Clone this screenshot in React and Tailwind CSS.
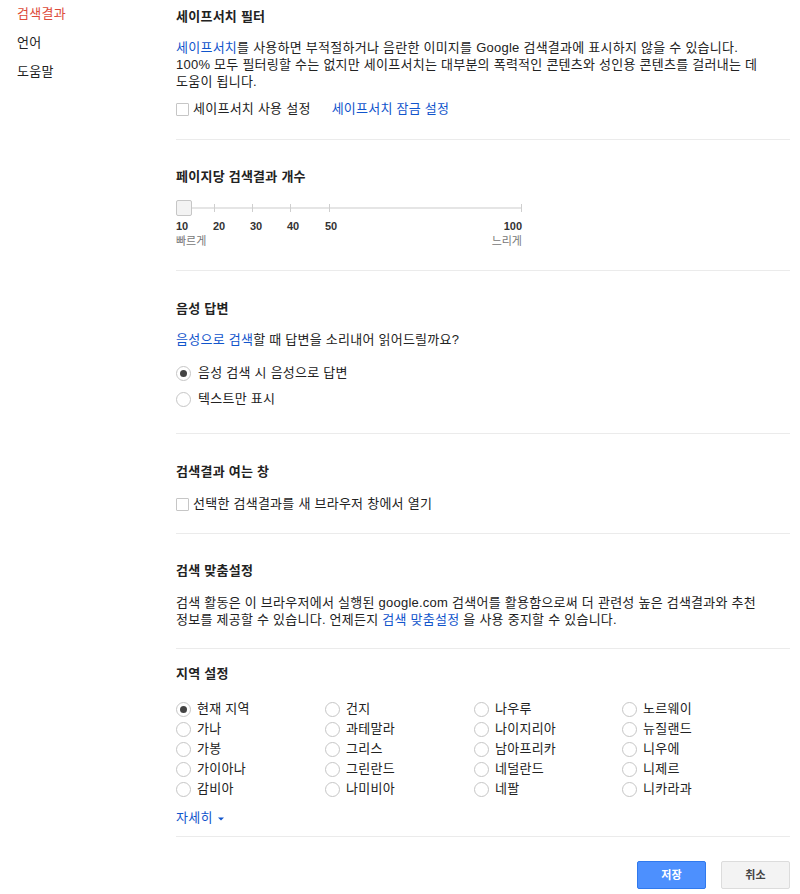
import React from "react";

const FONT = { fontFamily: '"Liberation Sans", Arial, "Noto Sans CJK KR", sans-serif' };

function Checkbox({ label }) {
  return (
    <label className="flex items-center h-5">
      <span className="w-[13px] h-[13px] border border-[#c6c6c6] rounded-[1px] bg-white mr-[4px]" />
      <span className="text-[#222]">{label}</span>
    </label>
  );
}

function Radio({ label, checked, gap = "ml-[7px]" }) {
  return (
    <div className="flex items-center h-5 whitespace-nowrap">
      <span className="w-[15px] h-[15px] rounded-full border border-[#c6c6c6] bg-white flex items-center justify-center shrink-0">
        {checked && <span className="w-[7px] h-[7px] rounded-full bg-[#444]" />}
      </span>
      <span className={`${gap} text-[#222]`}>{label}</span>
    </div>
  );
}

function Divider({ className = "" }) {
  return <div className={`h-px bg-[#ebebeb] w-[614px] ${className}`} />;
}

function Heading({ children, className = "" }) {
  return <div className={`h-5 leading-5 font-bold text-[#222] ${className}`}>{children}</div>;
}

const regions = [
  ["현재 지역", "건지", "나우루", "노르웨이"],
  ["가나", "과테말라", "나이지리아", "뉴질랜드"],
  ["가봉", "그리스", "남아프리카", "니우에"],
  ["가이아나", "그린란드", "네덜란드", "니제르"],
  ["감비아", "나미비아", "네팔", "니카라과"],
];

function Slider() {
  const ticks = [38, 76, 114, 153];
  const labels = [
    { t: "20", x: 37 },
    { t: "30", x: 74 },
    { t: "40", x: 111 },
    { t: "50", x: 149 },
  ];
  return (
    <div className="w-[346px] mt-[13px] tracking-normal">
      <div className="relative h-4">
        <div className="absolute left-[8px] right-0 top-[7px] h-[2px] bg-[#e5e5e5]" />
        {ticks.map((x) => (
          <div key={x} className="absolute top-[4px] w-px h-[8px] bg-[#cfcfcf]" style={{ left: x }} />
        ))}
        <div className="absolute right-0 top-[4px] w-px h-[8px] bg-[#cfcfcf]" />
        <div className="absolute left-0 top-0 w-4 h-4 rounded-[2px] border border-[#c6c6c6] bg-[#f3f3f3]" />
      </div>
      <div className="relative h-[14px] mt-[3px] text-[11px] leading-[14px] font-bold text-[#333]">
        <span className="absolute left-0">10</span>
        {labels.map((l) => (
          <span key={l.t} className="absolute" style={{ left: l.x }}>
            {l.t}
          </span>
        ))}
        <span className="absolute right-0">100</span>
      </div>
      <div className="flex justify-between h-[14px] mt-px text-[11px] leading-[14px] text-[#777]">
        <span>빠르게</span>
        <span>느리게</span>
      </div>
    </div>
  );
}

export default function App() {
  return (
    <div className="w-[800px] h-[894px] bg-white flex text-[13px] tracking-[0.25px]" style={FONT}>
      <div className="w-[176px] shrink-0 pl-[17px] pt-[5px]">
        <div className="h-[18px] leading-[18px] text-[#dd4b39]">검색결과</div>
        <div className="h-[18px] leading-[18px] mt-[11px] text-[#222]">언어</div>
        <div className="h-[18px] leading-[18px] mt-[11px] text-[#222]">도움말</div>
      </div>

      <div className="flex flex-col">
        {/* Safe search */}
        <Heading className="mt-[7px]">세이프서치 필터</Heading>
        <p className="mt-[12px] leading-[17px] text-[#222] whitespace-nowrap">
          <span className="text-[#15c]">세이프서치</span>를 사용하면 부적절하거나 음란한 이미지를 Google 검색결과에 표시하지 않을 수 있습니다.
          <br />
          100% 모두 필터링할 수는 없지만 세이프서치는 대부분의 폭력적인 콘텐츠와 성인용 콘텐츠를 걸러내는 데
          <br />
          도움이 됩니다.
        </p>
        <div className="flex items-center mt-[9px]">
          <Checkbox label="세이프서치 사용 설정" />
          <span className="ml-[21px] text-[#15c] h-5 leading-5">세이프서치 잠금 설정</span>
        </div>
        <Divider className="mt-[20px]" />

        {/* Results per page */}
        <Heading className="mt-[27px]">페이지당 검색결과 개수</Heading>
        <Slider />
        <Divider className="mt-[22px]" />

        {/* Voice */}
        <Heading className="mt-[28px]">음성 답변</Heading>
        <p className="mt-[12px] h-[18px] leading-[18px] text-[#222]">
          <span className="text-[#15c]">음성으로 검색</span>할 때 답변을 소리내어 읽어드릴까요?
        </p>
        <div className="mt-[14px] flex flex-col gap-[6px]">
          <Radio label="음성 검색 시 음성으로 답변" checked />
          <Radio label="텍스트만 표시" />
        </div>
        <Divider className="mt-[24px]" />

        {/* Open window */}
        <Heading className="mt-[28px]">검색결과 여는 창</Heading>
        <div className="mt-[12px]">
          <Checkbox label="선택한 검색결과를 새 브라우저 창에서 열기" />
        </div>
        <Divider className="mt-[19px]" />

        {/* Personalization */}
        <Heading className="mt-[27px]">검색 맞춤설정</Heading>
        <p className="mt-[13px] leading-[17px] text-[#222] whitespace-nowrap">
          검색 활동은 이 브라우저에서 실행된 google.com 검색어를 활용함으로써 더 관련성 높은 검색결과와 추천
          <br />
          정보를 제공할 수 있습니다. 언제든지 <span className="text-[#15c]">검색 맞춤설정</span> 을 사용 중지할 수 있습니다.
        </p>
        <Divider className="mt-[20px]" />

        {/* Region */}
        <Heading className="mt-[15px]">지역 설정</Heading>
        <div className="mt-[15px] grid grid-cols-[149px_149px_148px_150px]">
          {regions.flatMap((row, r) =>
            row.map((name, c) => (
              <Radio key={`${r}-${c}`} label={name} checked={r === 0 && c === 0} gap="ml-[6px]" />
            ))
          )}
        </div>
        <div className="mt-[9px] h-5 leading-5 text-[#15c] flex items-center">
          자세히
          <svg width="8" height="6" viewBox="0 0 8 6" className="ml-[4px] mt-[2px]">
            <path d="M1 1.5 L4 4.5 L7 1.5 Z" fill="#15c" />
          </svg>
        </div>
        <Divider className="mt-[8px]" />

        <div className="w-[614px] flex justify-end mt-[24px] gap-[15px]">
          <button className="w-[69px] h-[28px] rounded-[2px] border border-[#3079ed] bg-[#4d90fe] text-white text-[11px] font-bold">
            저장
          </button>
          <button className="w-[69px] h-[28px] rounded-[2px] border border-[#dcdcdc] bg-[#f3f3f3] text-[#444] text-[11px] font-bold">
            취소
          </button>
        </div>
      </div>
    </div>
  );
}
